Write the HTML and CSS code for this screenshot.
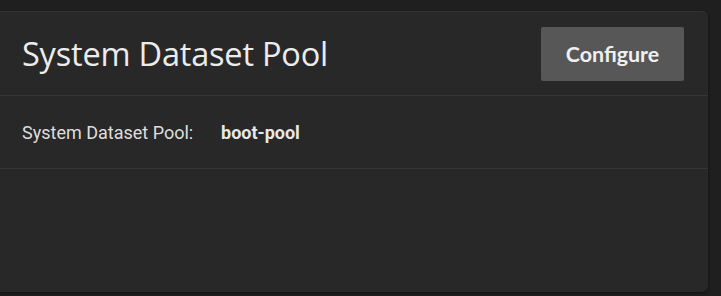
FILE: index.html
```html
<!DOCTYPE html>
<html lang="en">
<head>
    <meta charset="UTF-8">
    <meta name="viewport" content="width=device-width, initial-scale=1.0">
    <title>System Dataset Pool</title>
    <link rel="stylesheet" href="styles.css">
</head>
<body>
    <!-- Card -->
    <div class="card">
        <div class="card-header">
            <h1>System Dataset Pool</h1>
            <button class="configure-button">Configure</button>
        </div>
        <div class="card-row">
            <span class="label">System Dataset Pool:</span>
            <span class="value">boot-pool</span>
        </div>
    </div>
</body>
</html>
```

FILE: styles.css
```css
/* General Styles */
body {
    font-family: Roboto, "Liberation Sans", sans-serif;
    margin: 0;
    padding: 0;
    background-color: #1f1f1f;
    color: #e4e4e4;
    height: 296px;
    overflow: hidden;
}

/* Card */
.card {
    margin: 11px 13px 0 -4px;
    height: 281px;
    background-color: #282828;
    border-top: 1px solid #333;
    border-radius: 6px;
    box-shadow: 0 1px 3px rgba(0, 0, 0, 0.5);
    box-sizing: border-box;
}

.card-header {
    display: flex;
    align-items: center;
    justify-content: space-between;
    height: 83px;
    padding: 0 24px 0 26px;
    border-bottom: 1px solid #353535;
}

h1 {
    margin: 0;
    font-family: "Open Sans", sans-serif;
    font-weight: 400;
    font-size: 32.5px;
    color: #ececec;
    letter-spacing: -0.2px;
}

.configure-button {
    width: 143px;
    height: 54px;
    background-color: #575757;
    color: #f0f0f0;
    border: none;
    border-radius: 2px;
    font-family: Lato, sans-serif;
    font-weight: 700;
    font-size: 21.4px;
    cursor: pointer;
}

.card-row {
    display: flex;
    align-items: center;
    height: 72px;
    padding-left: 26px;
    border-bottom: 1px solid #353535;
    font-size: 18px;
}

.label {
    width: 199px;
    color: #dedede;
}

.value {
    font-weight: 700;
    color: #e8e8e8;
}
```
